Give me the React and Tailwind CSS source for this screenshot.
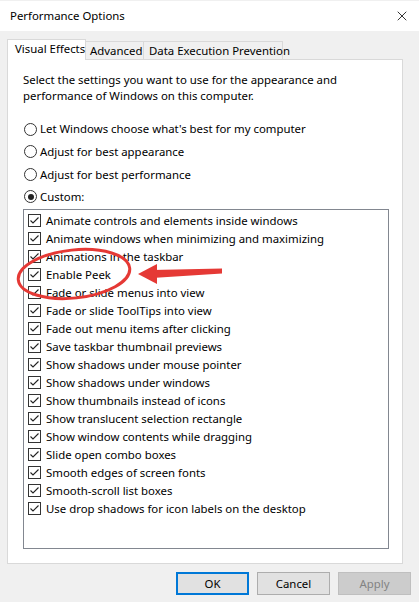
import { X } from 'lucide-react';

const EFFECTS = [
  'Animate controls and elements inside windows',
  'Animate windows when minimizing and maximizing',
  'Animations in the taskbar',
  'Enable Peek',
  'Fade or slide menus into view',
  'Fade or slide ToolTips into view',
  'Fade out menu items after clicking',
  'Save taskbar thumbnail previews',
  'Show shadows under mouse pointer',
  'Show shadows under windows',
  'Show thumbnails instead of icons',
  'Show translucent selection rectangle',
  'Show window contents while dragging',
  'Slide open combo boxes',
  'Smooth edges of screen fonts',
  'Smooth-scroll list boxes',
  'Use drop shadows for icon labels on the desktop',
];

const RADIOS = [
  { label: "Let Windows choose what's best for my computer", checked: false },
  { label: 'Adjust for best appearance', checked: false },
  { label: 'Adjust for best performance', checked: false },
  { label: 'Custom:', checked: true },
];

const Radio = ({ checked }) => (
  <span className="w-[13px] h-[13px] rounded-full border border-[#333] bg-white flex items-center justify-center shrink-0">
    {checked && <span className="w-[6px] h-[6px] rounded-full bg-[#222]" />}
  </span>
);

const Checkbox = () => (
  <span className="w-[13px] h-[13px] border border-[#333] bg-white flex items-center justify-center shrink-0">
    <svg width="11" height="11" viewBox="0 0 11 11">
      <path d="M1.5 5.5 L4 8 L9.5 2.5" fill="none" stroke="#222" strokeWidth="1.1" />
    </svg>
  </span>
);

const App = () => {
  return (
    <div className="relative w-[419px] h-[602px] bg-[#f0f0f0] overflow-hidden text-[11.4px] text-black font-['Noto_Sans',sans-serif] whitespace-nowrap">
      {/* title bar */}
      <div className="mt-[1px] h-[30px] bg-white flex items-center justify-between pl-[10px] pr-[9px]">
        <span className="text-[11.4px]">Performance Options</span>
        <X size={16} strokeWidth={1.2} className="text-black" />
      </div>

      <div className="px-[7px] pt-[7px] w-[410px]">
        {/* tabs */}
        <div className="flex items-end h-[21px]">
          <div className="h-[21px] w-[79px] bg-white border border-b-0 border-[#d9d9d9] pl-[7px] pt-[1px] leading-[16px] relative z-10 -mb-px">
            Visual Effects
          </div>
          <div className="h-[18px] w-[58px] border border-b-0 border-l-0 border-[#d9d9d9] pl-[4px] leading-[17px]">
            Advanced
          </div>
          <div className="h-[18px] w-[139px] border border-b-0 border-l-0 border-[#d9d9d9] pl-[5px] leading-[17px]">
            Data Execution Prevention
          </div>
        </div>

        {/* panel */}
        <div className="h-[505px] bg-white border border-[#d9d9d9] pl-[15px] pr-[13px] pt-[12px]">
          <p className="leading-[16px] w-[320px] whitespace-normal">
            Select the settings you want to use for the appearance and performance of Windows on this computer.
          </p>

          <div className="mt-[17px] flex flex-col gap-[6.6px]">
            {RADIOS.map((r) => (
              <div key={r.label} className="flex items-center gap-[3px] h-[16px] pl-[1px]">
                <Radio checked={r.checked} />
                <span>{r.label}</span>
              </div>
            ))}
          </div>

          <div className="mt-[4px] h-[340px] border border-[#828790] pt-[2px] pl-[4px]">
            {EFFECTS.map((label) => (
              <div key={label} className="flex items-center gap-[5px] h-[18px]">
                <Checkbox />
                <span>{label}</span>
              </div>
            ))}
          </div>
        </div>
      </div>

      {/* buttons */}
      <div className="flex justify-end gap-[8px] pr-[8px] mt-[8px]">
        <button className="w-[73px] h-[23px] bg-[#e1e1e1] border-2 border-[#0078d7]">OK</button>
        <button className="w-[73px] h-[23px] bg-[#e1e1e1] border border-[#adadad]">Cancel</button>
        <button className="w-[73px] h-[23px] bg-[#cccccc] border border-[#bfbfbf] text-[#838383]">Apply</button>
      </div>

      {/* annotation */}
      <svg className="absolute inset-0 pointer-events-none" width="419" height="602">
        <ellipse
          cx="74"
          cy="274"
          rx="56"
          ry="24"
          transform="rotate(-6 74 274)"
          fill="none"
          stroke="#e53935"
          strokeWidth="3"
        />
        <path d="M152 270 L222 268.5 L222 273.5 L152 278 Z" fill="#e53935" />
        <path d="M138 274 L157 264 L157 284 Z" fill="#e53935" />
      </svg>
    </div>
  );
};

export default App;
